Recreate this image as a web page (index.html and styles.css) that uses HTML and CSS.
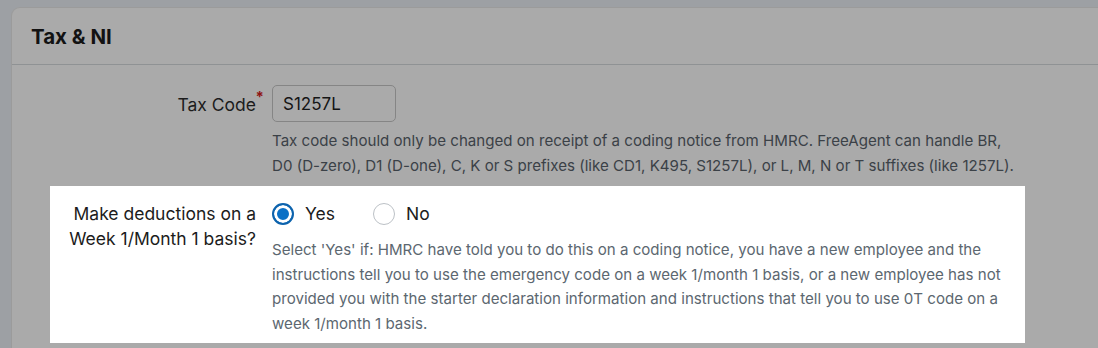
FILE: index.html
```html
<!DOCTYPE html>
<html lang="en">
<head>
<meta charset="utf-8">
<title>Tax &amp; NI</title>
<link rel="stylesheet" href="styles.css">
</head>
<body>
<div class="card">
  <div class="card-header"><h2 class="card-title">Tax &amp; NI</h2></div>
  <div class="card-body">
    <div class="field">
      <label class="field-label" for="taxcode"><span class="label-text">Tax Code<span class="req">*</span></span></label>
      <div class="field-control">
        <input id="taxcode" class="text-input" type="text" value="S1257L">
        <p class="hint hint--dim">Tax code should only be changed on receipt of a coding notice from HMRC. FreeAgent can handle BR, D0 (D-zero), D1 (D-one), C, K or S prefixes (like CD1, K495, S1257L), or L, M, N or T suffixes (like 1257L).</p>
      </div>
    </div>
    <div class="field field--highlight">
      <div class="field-label field-label--multi">Make deductions on a Week 1/Month 1 basis?</div>
      <div class="field-control">
        <div class="radio-group">
          <label class="radio"><input type="radio" name="w1m1" checked><span>Yes</span></label>
          <label class="radio"><input type="radio" name="w1m1"><span>No</span></label>
        </div>
        <p class="hint">Select 'Yes' if: HMRC have told you to do this on a coding notice, you have a new employee and the instructions tell you to use the emergency code on a week 1/month 1 basis, or a new employee has not provided you with the starter declaration information and instructions that tell you to use 0T code on a week 1/month 1 basis.</p>
      </div>
    </div>
  </div>
</div>
</body>
</html>
```
FILE: styles.css
```css
* { box-sizing: border-box; }
html, body { margin: 0; padding: 0; }
body {
  background: #9da0a4;
  font-family: Inter, "Liberation Sans", sans-serif;
  color: #1b1b1b;
  width: 1098px;
  height: 348px;
  overflow: hidden;
  padding: 7px 0 0 11px;
}
.card {
  width: 1100px;
  height: 341px;
  background: #aaaaaa;
  border: 1px solid #9b9b9b;
  border-right: none;
  border-bottom: none;
  border-top-left-radius: 9px;
  overflow: hidden;
}
.card-header {
  height: 57px;
  display: flex;
  align-items: center;
  padding-left: 19px;
  border-bottom: 1px solid #8f9294;
}
.card-title {
  margin: 0;
  font-size: 20.5px;
  font-weight: 700;
  color: #121212;
}
.card-body {
  padding: 20px 0 0 38px;
}
.field {
  width: 975px;
  display: grid;
  grid-template-columns: 206px 745px;
  column-gap: 16px;
  margin-bottom: 8px;
}
.field--highlight {
  background: #ffffff;
  padding: 15px 0 6px;
}
.field-label {
  text-align: right;
  font-size: 17.5px;
  line-height: 25px;
  padding-top: 7px;
  color: #1c1c1c;
}
.field-label--multi { padding-top: 0; }
.label-text { position: relative; }
.req {
  position: absolute;
  right: -8px;
  top: -10px;
  color: #8f1414;
  font-size: 15px;
  font-weight: 700;
}
.text-input {
  display: block;
  width: 124px;
  height: 37px;
  border: 1px solid #858585;
  border-radius: 5px;
  background: transparent;
  font: inherit;
  font-size: 17px;
  color: #151515;
  padding: 0 10px;
  outline: none;
}
.hint {
  margin: 7px 0 0;
  font-size: 15.1px;
  line-height: 24.6px;
  color: #5c6770;
}
.hint--dim { color: #3b4147; }
.field--highlight .hint { margin-top: 12px; }
.radio-group {
  display: flex;
  gap: 38px;
  height: 25px;
  align-items: center;
}
.radio {
  display: flex;
  align-items: center;
  gap: 11px;
  font-size: 17.5px;
  color: #1c1c1c;
}
.radio input {
  appearance: none;
  -webkit-appearance: none;
  margin: 0;
  width: 22px;
  height: 22px;
  border-radius: 50%;
  border: 1px solid #bcc1c6;
  background: #fff;
}
.radio input:checked {
  border: 2px solid #0d63ad;
  background: #0a70c6;
  box-shadow: inset 0 0 0 3px #fff;
}
```
